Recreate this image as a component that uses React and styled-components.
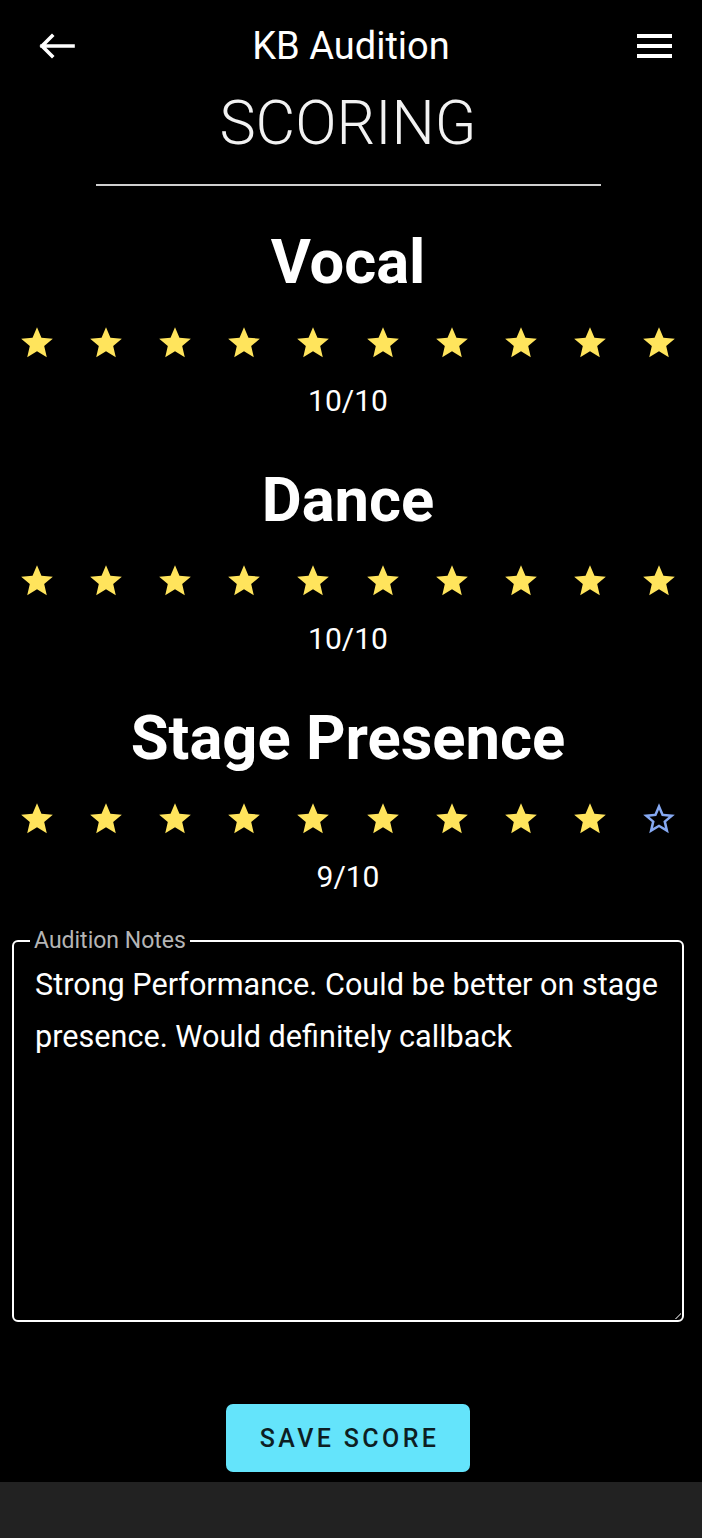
import React from "react";
import styled, { createGlobalStyle } from "styled-components";

const GlobalStyle = createGlobalStyle`
  html, body {
    margin: 0;
    padding: 0;
    background: #000;
  }
  body {
    font-family: Roboto, "Noto Sans", "Liberation Sans", sans-serif;
    color: #fff;
  }
  * {
    box-sizing: border-box;
  }
`;

const categories = [
  { name: "Vocal", score: 10 },
  { name: "Dance", score: 10 },
  { name: "Stage Presence", score: 9 }
];

const STAR =
  "M12 17.27L18.18 21l-1.64-7.03L22 9.24l-7.19-.61L12 2 9.19 8.63 2 9.24l5.46 4.73L5.82 21z";
const STAR_BORDER =
  "M22 9.24l-7.19-.62L12 2 9.19 8.63 2 9.24l5.46 4.73L5.82 21 12 17.27 18.18 21l-1.63-7.03L22 9.24zM12 15.4l-3.76 2.27 1-4.28-3.32-2.88 4.38-.38L12 6.1l1.71 4.04 4.38.38-3.32 2.88 1 4.28L12 15.4z";

const Star = ({ filled }) => (
  <StarIcon viewBox="0 0 24 24" filled={filled ? 1 : 0}>
    <path d={filled ? STAR : STAR_BORDER} />
  </StarIcon>
);

const App = () => {
  return (
    <Page>
      <GlobalStyle />
      <Header>
        <BackBtn aria-label="back">
          <svg width="36" height="26" viewBox="0 0 36 26">
            <path
              d="M34 13H3M13 3L3 13l10 10"
              fill="none"
              stroke="#fff"
              strokeWidth="3.6"
              strokeLinecap="square"
            />
          </svg>
        </BackBtn>
        <Title>KB Audition</Title>
        <MenuBtn aria-label="menu">
          <span />
          <span />
          <span />
        </MenuBtn>
      </Header>
      <Main>
        <PageHeading>SCORING</PageHeading>
        <Divider />
        {categories.map((c, i) => (
          <Section key={c.name} first={i === 0 ? 1 : 0}>
            <CategoryName>{c.name}</CategoryName>
            <StarRow>
              {Array.from({ length: 10 }).map((_, n) => (
                <Star key={n} filled={n < c.score} />
              ))}
            </StarRow>
            <Score>{c.score}/10</Score>
          </Section>
        ))}
        <NotesField>
          <NotesLabel>Audition Notes</NotesLabel>
          <NotesText>
            Strong Performance. Could be better on stage presence. Would
            definitely callback
          </NotesText>
          <Grip />
        </NotesField>
        <SaveButton>SAVE SCORE</SaveButton>
      </Main>
      <BottomBar />
    </Page>
  );
};

const Page = styled.div`
  min-height: 1538px;
  display: flex;
  flex-direction: column;
  background: #000;
`;

const Header = styled.header`
  height: 89px;
  display: grid;
  grid-template-columns: 1fr auto 1fr;
  align-items: center;
  padding: 0 30px;
`;

const BackBtn = styled.div`
  justify-self: start;
  display: flex;
  margin-left: 9px;
  margin-top: 3px;
`;

const Title = styled.div`
  font-size: 38px;
  font-weight: 400;
  color: #fff;
  margin-top: 3px;
`;

const MenuBtn = styled.div`
  justify-self: end;
  width: 35px;
  display: flex;
  flex-direction: column;
  gap: 6px;
  margin-top: 3px;

  span {
    display: block;
    height: 3.8px;
    background: #fff;
  }
`;

const Main = styled.main`
  flex: 1;
  display: flex;
  flex-direction: column;
  align-items: center;
  padding-right: 6px;
`;

const PageHeading = styled.h1`
  margin: 0;
  font-size: 61px;
  line-height: 68px;
  font-weight: 300;
  color: #f2f2f2;
`;

const Divider = styled.div`
  width: 505px;
  height: 2px;
  margin-top: 27px;
  background: #cfcfcf;
`;

const Section = styled.section`
  width: 100%;
  display: flex;
  flex-direction: column;
  align-items: center;
  margin-top: ${(p) => (p.first ? "40px" : "47px")};
`;

const CategoryName = styled.h2`
  margin: 0;
  font-size: 61.5px;
  line-height: 72px;
  font-weight: 700;
  color: #fff;
`;

const StarRow = styled.div`
  display: flex;
  justify-content: center;
  gap: 31.1px;
  margin-top: 26px;
`;

const StarIcon = styled.svg`
  width: 38px;
  height: 38px;
  display: block;
  fill: ${(p) => (p.filled ? "#ffe45c" : "#86a9f2")};
`;

const Score = styled.div`
  margin-top: 23px;
  font-size: 30px;
  line-height: 32px;
  color: #fff;
`;

const NotesField = styled.fieldset`
  position: relative;
  width: 672px;
  margin: 36px 0 0;
  padding: 0 21px;
  border: 2px solid #fff;
  border-radius: 6px;
`;

const NotesLabel = styled.legend`
  margin-left: -5px;
  padding: 0 4px;
  font-size: 23px;
  line-height: 24px;
  color: #b5b5b5;
`;

const NotesText = styled.div`
  height: 361px;
  margin-top: 6px;
  font-size: 30.6px;
  line-height: 52px;
  color: #fff;
`;

const Grip = styled.div`
  position: absolute;
  right: 1px;
  bottom: 1px;
  width: 6px;
  height: 6px;
  background: linear-gradient(
    135deg,
    transparent 45%,
    #888 45%,
    #888 60%,
    transparent 60%
  );
`;

const SaveButton = styled.button`
  margin-top: 82px;
  width: 244px;
  height: 68px;
  border: none;
  border-radius: 7px;
  background: #64e4fb;
  color: #0d1e23;
  font-family: Roboto, "Noto Sans", "Liberation Sans", sans-serif;
  font-size: 25px;
  font-weight: 500;
  letter-spacing: 3.4px;
  padding: 0 0 0 3px;
  box-shadow: 0 2px 3px rgba(0, 0, 0, 0.3);
`;

const BottomBar = styled.div`
  height: 56px;
  margin-top: 10px;
  background: #222;
`;

export default App;
